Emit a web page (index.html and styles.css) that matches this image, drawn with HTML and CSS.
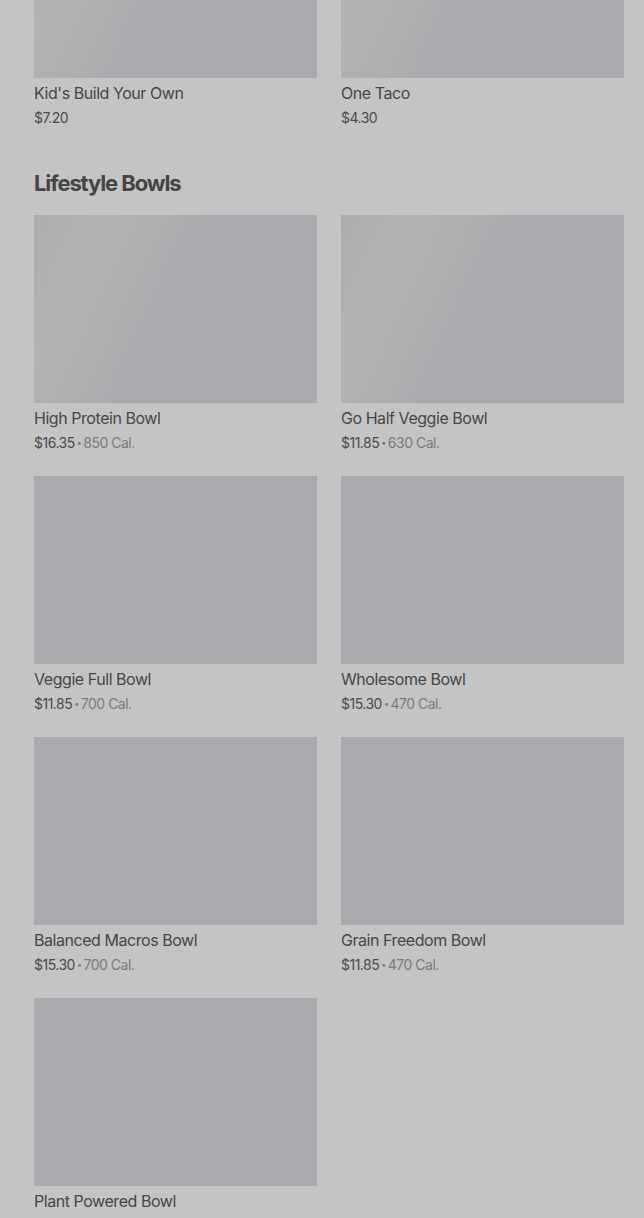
FILE: index.html
```html
<!DOCTYPE html>
<html lang="en">
<head>
<meta charset="utf-8">
<link rel="stylesheet" href="styles.css">
</head>
<body>
<main class="menu">
  <section class="section section--top">
    <div class="grid">
      <div class="card">
        <div class="thumb thumb--shimmer"></div>
        <div class="name">Kid's Build Your Own</div>
        <div class="meta"><span class="price">$7.20</span></div>
      </div>
      <div class="card">
        <div class="thumb thumb--shimmer"></div>
        <div class="name">One Taco</div>
        <div class="meta"><span class="price">$4.30</span></div>
      </div>
    </div>
  </section>
  <section class="section">
    <h2 class="heading">Lifestyle Bowls</h2>
    <div class="grid">
      <div class="card">
        <div class="thumb thumb--shimmer"></div>
        <div class="name">High Protein Bowl</div>
        <div class="meta"><span class="price">$16.35</span><span class="dot">•</span><span class="cal">850 Cal.</span></div>
      </div>
      <div class="card">
        <div class="thumb thumb--shimmer"></div>
        <div class="name">Go Half Veggie Bowl</div>
        <div class="meta"><span class="price">$11.85</span><span class="dot">•</span><span class="cal">630 Cal.</span></div>
      </div>
      <div class="card">
        <div class="thumb"></div>
        <div class="name">Veggie Full Bowl</div>
        <div class="meta"><span class="price">$11.85</span><span class="dot">•</span><span class="cal">700 Cal.</span></div>
      </div>
      <div class="card">
        <div class="thumb"></div>
        <div class="name">Wholesome Bowl</div>
        <div class="meta"><span class="price">$15.30</span><span class="dot">•</span><span class="cal">470 Cal.</span></div>
      </div>
      <div class="card">
        <div class="thumb"></div>
        <div class="name">Balanced Macros Bowl</div>
        <div class="meta"><span class="price">$15.30</span><span class="dot">•</span><span class="cal">700 Cal.</span></div>
      </div>
      <div class="card">
        <div class="thumb"></div>
        <div class="name">Grain Freedom Bowl</div>
        <div class="meta"><span class="price">$11.85</span><span class="dot">•</span><span class="cal">470 Cal.</span></div>
      </div>
      <div class="card">
        <div class="thumb"></div>
        <div class="name">Plant Powered Bowl</div>
      </div>
    </div>
  </section>
</main>
</body>
</html>
```

FILE: styles.css
```css
html, body {
  margin: 0;
  padding: 0;
  background: #c4c4c4;
  overflow: hidden;
}
body {
  font-family: Inter, "Liberation Sans", sans-serif;
  color: #474747;
}
.menu {
  padding: 0 20px 0 34px;
}
.section--top {
  margin-top: -110px;
}
.grid {
  display: grid;
  grid-template-columns: 283px 283px;
  column-gap: 24px;
  row-gap: 23px;
}
.thumb {
  height: 188px;
  background: #a9aaad;
}
.thumb--shimmer {
  background: linear-gradient(115deg, #abacae 0%, #b1b2b2 18%, #aeafb0 32%, #a9aaad 46%, #a9aaad 100%);
}
.name {
  margin-top: 5px;
  font-size: 16px;
  line-height: 20px;
  font-weight: 400;
  color: #474747;
  letter-spacing: -0.45px;
}
.meta {
  margin-top: 5px;
  font-size: 14px;
  line-height: 20px;
  color: #4b4b4b;
  letter-spacing: -0.5px;
  display: flex;
  align-items: center;
}
.dot {
  font-size: 9px;
  margin: 0 2px;
  color: #7a7a7a;
}
.cal {
  color: #7b7b7b;
}
.heading {
  margin: 39px 0 16px;
  font-size: 22px;
  line-height: 32px;
  font-weight: 700;
  letter-spacing: -1.1px;
  color: #454545;
}
```
